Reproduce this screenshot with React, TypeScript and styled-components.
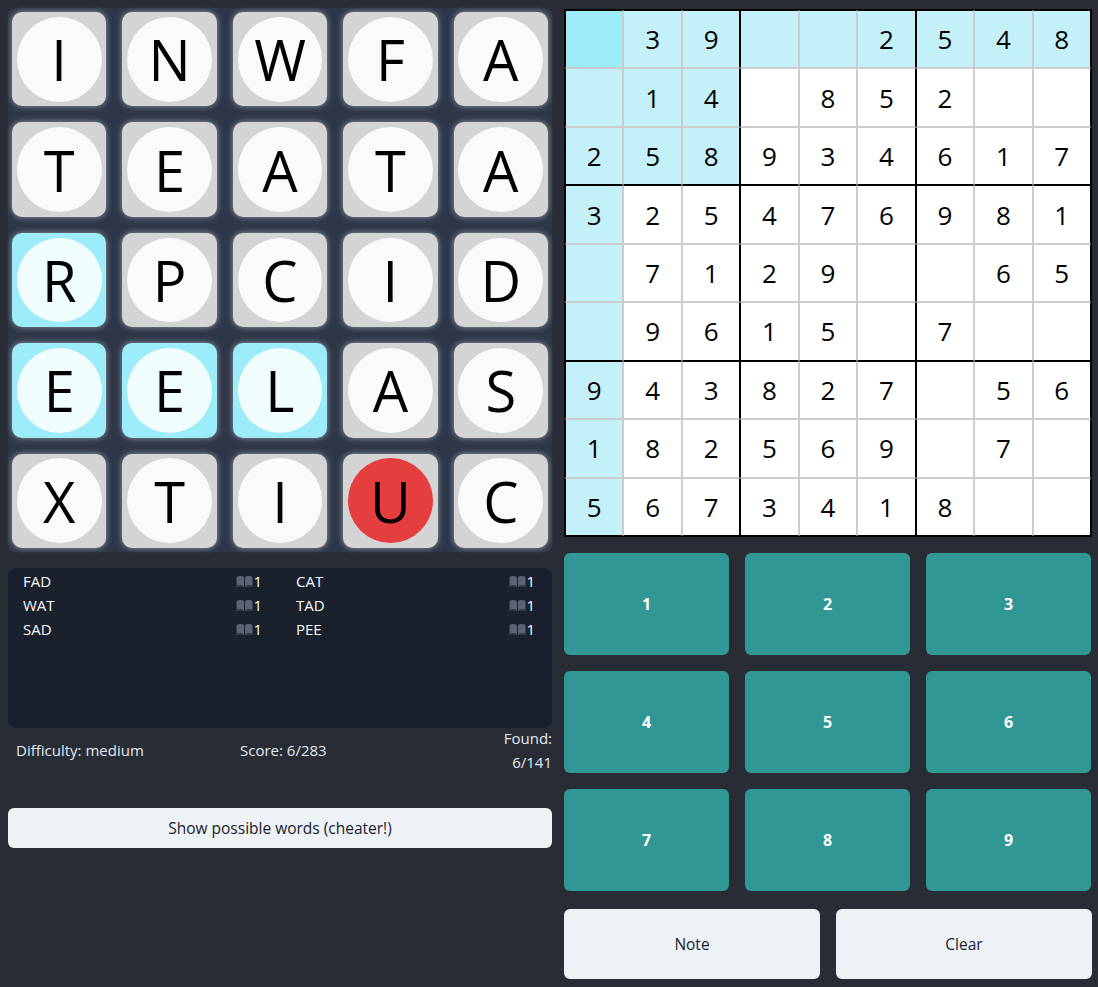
import React from "react";
import styled, { createGlobalStyle, css } from "styled-components";

const GlobalStyle = createGlobalStyle`
  html, body { margin: 0; padding: 0; background: #282c34; }
  body { font-family: "Open Sans", "Noto Sans", sans-serif; color: #e2e8f0; }
  * { box-sizing: border-box; }
`;

const Page = styled.div`
  display: flex;
  gap: 12px;
  padding: 8px;
  width: 1098px;
  height: 987px;
  align-items: flex-start;
`;

const LeftCol = styled.div`
  width: 544px;
  display: flex;
  flex-direction: column;
`;

const RightCol = styled.div`
  width: 528px;
  display: flex;
  flex-direction: column;
  padding-top: 1px;
`;

const Board = styled.div`
  width: 544px;
  height: 544px;
  background: #2d3748;
  border-radius: 6px;
  padding: 4px;
  display: grid;
  grid-template-columns: repeat(5, 1fr);
  grid-template-rows: repeat(5, 1fr);
  gap: 16px;
`;

const Tile = styled.div<{ $sel: boolean }>`
  background: ${(p) => (p.$sel ? "#9decf9" : "#d4d4d4")};
  border-radius: 10px;
  box-shadow: 0 0 6px 0 rgba(255, 255, 255, 0.5);
  display: flex;
  align-items: center;
  justify-content: center;
`;

const Disc = styled.div<{ $sel: boolean; $cur: boolean }>`
  width: 90%;
  height: 90%;
  border-radius: 50%;
  background: ${(p) => (p.$cur ? "#e53e3e" : p.$sel ? "#f0fdff" : "#fafafa")};
  display: flex;
  align-items: center;
  justify-content: center;
  font-size: 56px;
  color: #000;
  line-height: 1;
`;

const WordBox = styled.div`
  margin-top: 16px;
  height: 160px;
  background: #1a202c;
  border-radius: 8px;
  padding: 1px 17px 0 15px;
  display: grid;
  grid-template-columns: 1fr 1fr;
  column-gap: 34px;
  align-content: start;
  font-size: 15px;
  line-height: 24px;
  color: #f7fafc;
`;

const WordRow = styled.div`
  display: flex;
  justify-content: space-between;
  align-items: center;
`;

const Count = styled.span`
  display: flex;
  align-items: center;
`;

const Stats = styled.div`
  display: flex;
  align-items: center;
  font-size: 15px;
  line-height: 24px;
  color: #e2e8f0;
  margin-top: -2px;
`;

const Difficulty = styled.div`
  flex: 0 0 232px;
  padding-left: 8px;
`;

const Score = styled.div`
  flex: 1;
`;

const Found = styled.div`
  width: 52px;
  text-align: right;
`;

const LightButton = styled.button<{ $h: number }>`
  height: ${(p) => p.$h}px;
  background: #edf2f7;
  color: #1a202c;
  border: none;
  border-radius: 6px;
  font-family: inherit;
  font-size: 15.5px;
  font-weight: 500;
  cursor: pointer;
`;

const CheatButton = styled(LightButton)`
  margin-top: 34px;
  width: 100%;
`;

const Sudoku = styled.div`
  width: 528px;
  height: 528px;
  display: grid;
  grid-template-columns: repeat(9, 1fr);
  grid-template-rows: repeat(9, 1fr);
  border: 1px solid #000;
  background: #fff;
`;

const Cell = styled.div<{ $r: number; $c: number; $bg: string }>`
  background: ${(p) => p.$bg};
  display: flex;
  align-items: center;
  justify-content: center;
  font-size: 26px;
  color: #000;
  border: 1px solid #cccccc;
  ${(p) =>
    p.$c % 3 === 0 &&
    css`
      border-left-color: #000;
    `}
  ${(p) =>
    p.$c % 3 === 2 &&
    css`
      border-right-color: #000;
    `}
  ${(p) =>
    p.$r % 3 === 0 &&
    css`
      border-top-color: #000;
    `}
  ${(p) =>
    p.$r % 3 === 2 &&
    css`
      border-bottom-color: #000;
    `}
`;

const NumPad = styled.div`
  margin-top: 16px;
  display: grid;
  grid-template-columns: repeat(3, 165px);
  grid-auto-rows: 102px;
  column-gap: 16px;
  row-gap: 16px;
`;

const NumButton = styled.button`
  background: #319795;
  color: #fff;
  border: none;
  border-radius: 6px;
  font-family: inherit;
  font-size: 16px;
  font-weight: 700;
  cursor: pointer;
`;

const ActionRow = styled.div`
  margin-top: 18px;
  display: grid;
  grid-template-columns: 1fr 1fr;
  column-gap: 16px;
`;

const letters = ["INWFA", "TEATA", "RPCID", "EELAS", "XTIUC"];
const selected = new Set(["2-0", "3-0", "3-1", "3-2"]);

const words: [string, string][] = [
  ["FAD", "CAT"],
  ["WAT", "TAD"],
  ["SAD", "PEE"],
];

const grid = [
  "039002548",
  "014085200",
  "258934617",
  "325476981",
  "071290065",
  "096150700",
  "943827056",
  "182569070",
  "567341800",
];

const Book = () => (
  <svg width="17" height="12" viewBox="0 0 17 12">
    <path d="M1 1.5 C3.5 0.6 6 0.8 8 2 L8 11 C6 10 3.5 9.9 1 10.6 Z" fill="#5b6372" />
    <path d="M16 1.5 C13.5 0.6 11 0.8 9 2 L9 11 C11 10 13.5 9.9 16 10.6 Z" fill="#5b6372" />
    <path d="M0.3 2.5 L0.3 11.6 C3 10.8 6 10.9 8.5 12 C11 10.9 14 10.8 16.7 11.6 L16.7 2.5" stroke="#4a5160" strokeWidth="0.8" fill="none" />
  </svg>
);

const WordItem = ({ w }: { w: string }) => (
  <WordRow>
    <span>{w}</span>
    <Count>
      <Book />1
    </Count>
  </WordRow>
);

export default function App() {
  return (
    <>
      <GlobalStyle />
      <Page>
        <LeftCol>
          <Board>
            {letters.map((row, r) =>
              row.split("").map((ch, c) => {
                const sel = selected.has(`${r}-${c}`);
                const cur = r === 4 && c === 3;
                return (
                  <Tile key={`${r}-${c}`} $sel={sel}>
                    <Disc $sel={sel} $cur={cur}>
                      {ch}
                    </Disc>
                  </Tile>
                );
              })
            )}
          </Board>
          <WordBox>
            {words.map(([a, b]) => (
              <React.Fragment key={a}>
                <WordItem w={a} />
                <WordItem w={b} />
              </React.Fragment>
            ))}
          </WordBox>
          <Stats>
            <Difficulty>Difficulty: medium</Difficulty>
            <Score>Score: 6/283</Score>
            <Found>Found: 6/141</Found>
          </Stats>
          <CheatButton $h={40}>Show possible words (cheater!)</CheatButton>
        </LeftCol>
        <RightCol>
          <Sudoku>
            {grid.map((row, r) =>
              row.split("").map((d, c) => {
                const hl = r === 0 || c === 0 || (r < 3 && c < 3);
                const bg = r === 0 && c === 0 ? "#9decf9" : hl ? "#c4f1f9" : "#ffffff";
                return (
                  <Cell key={`${r}-${c}`} $r={r} $c={c} $bg={bg}>
                    {d === "0" ? "" : d}
                  </Cell>
                );
              })
            )}
          </Sudoku>
          <NumPad>
            {[1, 2, 3, 4, 5, 6, 7, 8, 9].map((n) => (
              <NumButton key={n}>{n}</NumButton>
            ))}
          </NumPad>
          <ActionRow>
            <LightButton $h={70}>Note</LightButton>
            <LightButton $h={70}>Clear</LightButton>
          </ActionRow>
        </RightCol>
      </Page>
    </>
  );
}
